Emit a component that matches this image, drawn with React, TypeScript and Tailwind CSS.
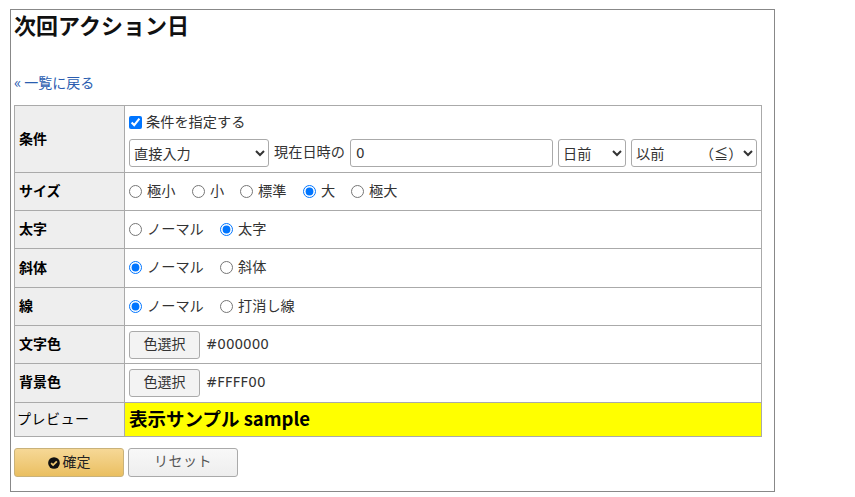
const font = { fontFamily: '"Noto Sans CJK JP", "Noto Sans", sans-serif' };

function Radio({ label, checked, name, className }: { label: string; checked?: boolean; name: string; className?: string }) {
  return (
    <label className={"inline-flex items-center " + (className ?? "")}>
      <input type="radio" name={name} defaultChecked={checked} className="m-0 h-[13px] w-[13px]" />
      <span className="ml-[5px] pb-[2px]">{label}</span>
    </label>
  );
}

function HeadCell({ children, plain }: { children: React.ReactNode; plain?: boolean }) {
  return (
    <th className={"border border-[#aaaaaa] bg-[#eeeeee] pb-[2px] pl-[4px] text-left text-[14px] text-black " + (plain ? "font-normal" : "font-bold")}>
      {children}
    </th>
  );
}

function ColorRow({ label, value, tall }: { label: string; value: string; tall?: boolean }) {
  return (
    <tr className={tall ? "h-[39px]" : "h-[38px]"}>
      <HeadCell>
        <span className={tall ? "block pb-px" : "block"}>{label}</span>
      </HeadCell>
      <td className="border border-[#aaaaaa] pl-[4px]">
        <div className={tall ? "mb-px flex items-center" : "flex items-center"}>
          <button className="h-[28px] w-[71px] rounded-[3px] border border-[#aaaaaa] bg-[#f3f3f3] pb-[3px] text-[14px] text-[#333]">色選択</button>
          <span className="ml-[6px] pb-[1px] text-[13.5px] [font-family:'DejaVu_Sans',sans-serif]">{value}</span>
        </div>
      </td>
    </tr>
  );
}

export default function App() {
  return (
    <div style={font} className="h-[497px] w-[855px] overflow-hidden bg-white pl-[10px] pt-[9px] text-[14.2px] text-[#333]">
      <div className="h-[483px] w-[765px] border border-[#888888] pl-[3px]">
        <h1 className="h-[62px] pb-px text-[22px] leading-[29px] font-bold text-[#111]">次回アクション日</h1>
        <a href="#" className="block h-[33px] text-[14px] leading-[20px] text-[#2a5db0]">
          <span className="mr-[3px] text-[15px]">«</span>一覧に戻る
        </a>
        <table className="w-[748px] table-fixed border-collapse">
          <colgroup>
            <col className="w-[110px]" />
            <col />
          </colgroup>
          <tbody>
            <tr className="h-[67px]">
              <HeadCell>条件</HeadCell>
              <td className="border border-[#aaaaaa] pl-[4px]">
                <label className="flex items-center leading-[20px]">
                  <input type="checkbox" defaultChecked className="m-0 h-[13px] w-[13px]" />
                  <span className="ml-[4px] pb-[2px]">条件を指定する</span>
                </label>
                <div className="mt-[6px] flex items-center">
                  <select className="h-[28px] w-[140px] rounded-[3px] border border-[#aaaaaa]">
                    <option>直接入力</option>
                  </select>
                  <span className="ml-[5px] pb-[2px]">現在日時の</span>
                  <input defaultValue="0" className="ml-[5px] h-[28px] w-[203px] rounded-[3px] border border-[#aaaaaa] px-[5px] text-[13.5px] [font-family:'DejaVu_Sans',sans-serif]" />
                  <select className="ml-[5px] h-[28px] w-[68px] rounded-[3px] border border-[#aaaaaa]">
                    <option>日前</option>
                  </select>
                  <select className="ml-[5px] h-[28px] w-[126px] rounded-[3px] border border-[#aaaaaa]">
                    <option>以前　　　（≦）</option>
                  </select>
                </div>
              </td>
            </tr>
            <tr className="h-[38px]">
              <HeadCell>サイズ</HeadCell>
              <td className="border border-[#aaaaaa] pl-[4px]">
                <div className="flex items-center">
                  <Radio name="size" label="極小" className="w-[63px]" />
                  <Radio name="size" label="小" className="w-[48px]" />
                  <Radio name="size" label="標準" className="w-[63px]" />
                  <Radio name="size" label="大" checked className="w-[48px]" />
                  <Radio name="size" label="極大" />
                </div>
              </td>
            </tr>
            <tr className="h-[38px]">
              <HeadCell>太字</HeadCell>
              <td className="border border-[#aaaaaa] pl-[4px]">
                <div className="flex items-center">
                  <Radio name="bold" label="ノーマル" className="w-[91px]" />
                  <Radio name="bold" label="太字" checked />
                </div>
              </td>
            </tr>
            <tr className="h-[39px]">
              <HeadCell>斜体</HeadCell>
              <td className="border border-[#aaaaaa] pl-[4px]">
                <div className="flex items-center">
                  <Radio name="italic" label="ノーマル" checked className="w-[91px]" />
                  <Radio name="italic" label="斜体" />
                </div>
              </td>
            </tr>
            <tr className="h-[38px]">
              <HeadCell>線</HeadCell>
              <td className="border border-[#aaaaaa] pl-[4px]">
                <div className="flex items-center">
                  <Radio name="line" label="ノーマル" checked className="w-[91px]" />
                  <Radio name="line" label="打消し線" />
                </div>
              </td>
            </tr>
            <ColorRow label="文字色" value="#000000" />
            <ColorRow label="背景色" value="#FFFF00" tall />
            <tr className="h-[34px]">
              <HeadCell plain>
                <span className="-ml-[2px] tracking-[0.5px]">プレビュー</span>
              </HeadCell>
              <td className="border border-[#aaaaaa] bg-[#ffff00] pb-[2px] pl-[4px] text-[18.5px] font-bold text-black">表示サンプル sample</td>
            </tr>
          </tbody>
        </table>
        <div className="mt-[11px] flex gap-[4px]">
          <button className="flex h-[29px] w-[110px] items-center justify-center rounded-[3px] border border-[#c9b27a] bg-gradient-to-b from-[#f6d896] to-[#eabf60] pb-[2px] text-[14px] text-[#222]">
            <svg viewBox="0 0 16 16" className="mr-[3px] mt-[2px] h-[12px] w-[12px]">
              <circle cx="8" cy="8" r="7.8" fill="#111" />
              <path d="M4.2 8.2l2.6 2.6 5-5" fill="none" stroke="#f0c870" strokeWidth="2.4" />
            </svg>
            確定
          </button>
          <button className="h-[29px] w-[110px] rounded-[3px] border border-[#aaaaaa] bg-gradient-to-b from-[#f8f8f8] to-[#eeeeee] pb-[4px] text-[14px] tracking-[0.5px] text-[#555]">リセット</button>
        </div>
      </div>
    </div>
  );
}
